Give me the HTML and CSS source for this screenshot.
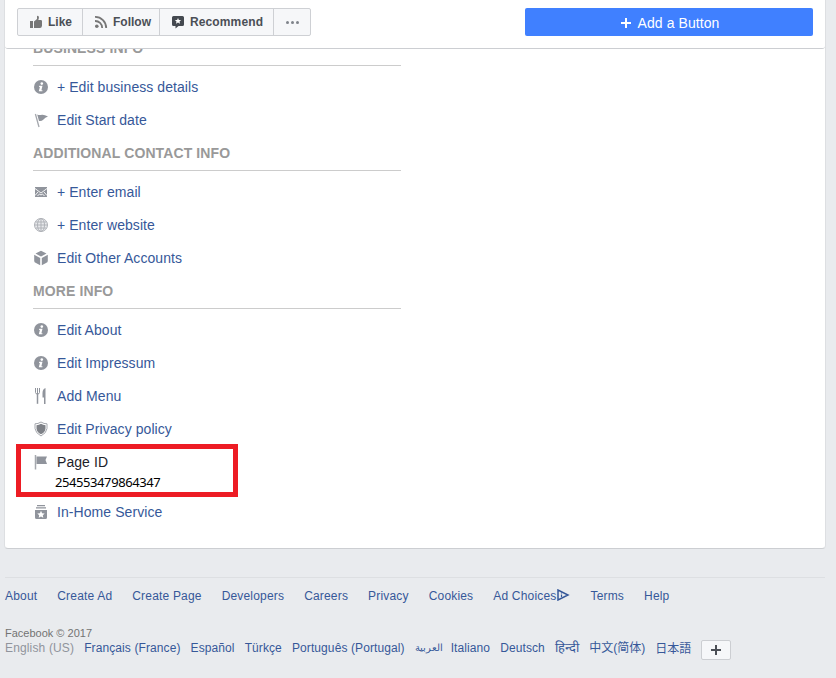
FILE: index.html
```
<!DOCTYPE html>
<html lang="en">
<head>
<meta charset="utf-8">
<title>Page Info</title>
<link rel="stylesheet" href="styles.css">
</head>
<body>
<svg class="defs" width="0" height="0">
  <symbol id="info" viewBox="0 0 16 16"><circle cx="8" cy="8" r="7" fill="#90949c"/><circle cx="8.8" cy="4.6" r="1.3" fill="#fff"/><path d="M6.300 6.800h3.200l-1.100 4.400h1v1.100H5.800l1.100-4.400h-.9z" fill="#fff"/></symbol>
</svg>
<main class="card">
  <header class="bar">
    <div class="actions">
      <button class="act like"><svg width="14" height="14" viewBox="0 0 14 14"><path fill="#777" d="M1 6h3v7H1zM5 6.600 8 4V1.200Q8.300.4 9.300 1q1 .8.500 2.400L9.300 5H12q1.200.2 1 1.200v4.600q-.3 2.200-2 2.200H5z"/></svg><span>Like</span></button>
      <button class="act follow"><svg width="14" height="14" viewBox="0 0 14 14"><g fill="none" stroke="#777" stroke-width="1.800"><path d="M1 1.900A11 11 0 0 1 12.200 13M1 6A7 7 0 0 1 8.200 13"/></g><circle cx="2.800" cy="11.200" r="1.800" fill="#777"/></svg><span>Follow</span></button>
      <button class="act rec"><svg width="14" height="14" viewBox="0 0 14 14"><path fill="#444950" d="M2.500 1h9Q13 1 13 2.500v7Q13 11 11.500 11H7.500L4.500 13.500V11h-2Q1 11 1 9.500v-7Q1 1 2.500 1z"/><path fill="#fff" d="m7 2.900.9 2 2.200.2-1.600 1.500.5 2.100-2-1.100-2 1.100.5-2.100-1.600-1.500 2.200-.2z"/></svg><span>Recommend</span></button>
      <button class="act more"><i></i><i></i><i></i></button>
    </div>
    <button class="cta"><svg width="12" height="12" viewBox="0 0 12 12"><path d="M6 1v10M1 6h10" stroke="#fff" stroke-width="2"/></svg><span>Add a Button</span></button>
  </header>
  <div class="content">
    <section>
      <h2>BUSINESS INFO</h2>
      <div class="row"><svg class="ic"><use href="#info"/></svg><a>+ Edit business details</a></div>
      <div class="row"><svg class="ic" viewBox="0 0 16 16"><path d="M2.400 2 6 15" stroke="#a5a8ae" stroke-width="1.300"/><path fill="#90949c" d="M4.200 2.500q2 1 4.800.3 2.400-.2 6 1.700-3 1.200-4.500 3Q8.500 9.500 6 9z"/></svg><a>Edit Start date</a></div>
    </section>
    <section>
      <h2>ADDITIONAL CONTACT INFO</h2>
      <div class="row"><svg class="ic" viewBox="0 0 16 16"><path fill="#90949c" d="M2 3h12v10H2z"/><path fill="none" stroke="#fff" stroke-width=".9" d="m2 4.500 6 4.500 6-4.500M2 11.500l3-3.500M14 11.500l-3-3.500M4.500 12 6.500 10l1.500 1 1.500-1 2 2"/></svg><a>+ Enter email</a></div>
      <div class="row"><svg class="ic" viewBox="0 0 16 16"><circle cx="8" cy="8" r="6.500" fill="#e9eaed"/><g fill="none" stroke="#b0b3b8"><circle cx="8" cy="8" r="6.500"/><ellipse cx="8" cy="8" rx="3.500" ry="6.500"/><path d="M8 1.500v13M1.500 8h13M2.500 5h11M2.500 11h11"/></g></svg><a>+ Enter website</a></div>
      <div class="row"><svg class="ic" viewBox="0 0 16 16"><path fill="#90949c" d="m8 .8 5.500 2.800L8 6.600 2.500 3.600zM1.200 4.800l6 3.200v7.200L3 13q-1.800-.7-1.800-2zM14.800 4.800l-6 3.200v7.200L13 13q1.800-.7 1.800-2z"/></svg><a>Edit Other Accounts</a></div>
    </section>
    <section>
      <h2>MORE INFO</h2>
      <div class="row"><svg class="ic"><use href="#info"/></svg><a>Edit About</a></div>
      <div class="row"><svg class="ic"><use href="#info"/></svg><a>Edit Impressum</a></div>
      <div class="row"><svg class="ic" viewBox="0 0 16 16"><path fill="none" stroke="#90949c" d="M2.500 0v4.500Q2.500 6 4.500 6t2-1.500V0M4.500 0v6"/><path stroke="#90949c" stroke-width="1.500" d="M4.500 6v9.800"/><path fill="#90949c" d="M12.500 0v16H11V9.500H9.500V5q0-4 3-5z"/></svg><a>Add Menu</a></div>
      <div class="row"><svg class="ic" viewBox="0 0 16 16"><path fill="#fff" stroke="#a5a8ae" d="M8 1q3 2 6 1.800v4.700Q13.500 12 8 15 2.500 12 2 7.500V2.800Q5 3 8 1z"/><path fill="#7e8187" d="M8 2.800q2 1.300 4.500 1.500v3.400Q12 11.200 8 13.300 4 11.200 3.500 7.700V4.300Q6 4.100 8 2.800z"/></svg><a>Edit Privacy policy</a></div>
      <div class="pageid">
        <div class="row"><svg class="ic" viewBox="0 0 16 16"><path stroke="#a5a8ae" stroke-width="1.500" d="M2.500 1v14.500"/><path fill="#90949c" d="M3.500 2.500h10.500l-1.500 3.500 1.500 4H3.500z"/></svg><span>Page ID</span></div>
        <div class="num">254553479864347</div>
      </div>
      <div class="row"><svg class="ic" viewBox="0 0 16 16"><path fill="#90949c" d="M4 1h8v1.200H4zM3 3.200h10v1.200H3zM2 6h12v7.500q0 1.500-1.500 1.500h-9Q2 15 2 13.500z"/><path fill="#fff" d="m8 6.800 1.100 2.400 2.600.3-1.900 1.800.5 2.500L8 12.500l-2.300 1.300.5-2.500-1.900-1.800 2.600-.3z"/></svg><a>In-Home Service</a></div>
    </section>
  </div>
</main>
<footer class="foot">
  <nav class="links"><a>About</a><a>Create Ad</a><a>Create Page</a><a>Developers</a><a>Careers</a><a>Privacy</a><a>Cookies</a><a class="adc">Ad Choices<svg width="14" height="12" viewBox="0 0 14 12"><path d="M2 1v10l10-5z" fill="none" stroke="#365899" stroke-width="1.500"/><path d="M5.500 3.500v1M5.500 5.500v2.500" stroke="#365899" stroke-width="1.200"/></svg></a><a>Terms</a><a>Help</a></nav>
  <div class="copy">Facebook © 2017</div>
  <div class="langs"><span>English (US)</span><a>Français (France)</a><a>Español</a><a>Türkçe</a><a>Português (Portugal)</a><a class="ar" lang="ar">العربية</a><a>Italiano</a><a>Deutsch</a><a class="hi" lang="hi">हिन्दी</a><a class="zh" lang="zh">中文(简体)</a><a class="ja" lang="ja">日本語</a><button class="plus"><svg width="10" height="10" viewBox="0 0 10 10"><path d="M5 0v10M0 5h10" stroke="#4b4f56" stroke-width="2"/></svg></button></div>
</footer>
</body>
</html>
```
FILE: styles.css
```
* { box-sizing: border-box; }
body { margin: 0; height: 678px; overflow: hidden; background: #e9ebee; font-family: "Liberation Sans", Arial, sans-serif; font-size: 14px; color: #1d2129; }
button { font: inherit; padding: 0; margin: 0; border: 0; }
a { color: #365899; }
svg { flex: none; display: block; }
.defs { position: absolute; }
.card { margin-left: 4px; width: 822px; height: 549px; background: #fff; border: 1px solid #dddfe2; border-top: 0; border-bottom-color: #ccced2; border-radius: 0 0 4px 4px; }
.bar { height: 49px; border-bottom: 1px solid #ccced2; border-radius: 0 0 3px 3px; display: flex; justify-content: space-between; align-items: flex-start; padding: 8px 12px; }
.actions { display: flex; height: 28px; border: 1px solid #ced0d4; border-radius: 2px; background: #f6f7f9; }
.act { display: flex; align-items: center; background: none; font-size: 12px; font-weight: bold; color: #4b4f56; border-right: 1px solid #ced0d4; white-space: nowrap; }
.act svg { margin-right: 5px; }
.like { width: 65px; padding-left: 11px; }
.follow { width: 77px; padding-left: 11px; }
.rec { width: 114px; padding-left: 11px; }
.rec span { letter-spacing: .12px; }
.more { width: 36px; border: 0; justify-content: center; gap: 2px; }
.more i { width: 3px; height: 3px; border-radius: 50%; background: #7f838a; }
.cta { width: 288px; height: 28px; background: #4080ff; border-radius: 2px; color: #fff; display: flex; align-items: center; justify-content: center; gap: 6px; padding: 2px 0 0 1px; letter-spacing: .08px; }
.content { height: 499px; overflow: hidden; padding-left: 28px; }
section { width: 368px; padding-bottom: 8px; }
section:first-child { margin-top: -10px; }
h2 { margin: 0 0 4px; height: 27px; border-bottom: 1px solid #ccc; font-size: 14px; line-height: 18px; color: #999; white-space: nowrap; letter-spacing: .11px; }
.row { height: 33px; display: flex; align-items: center; white-space: nowrap; line-height: 18px; letter-spacing: .07px; }
.ic { width: 16px; height: 16px; margin-right: 8px; }
.pageid { height: 50px; position: relative; }
.pageid::after { content: ""; position: absolute; box-sizing: border-box; left: -17px; top: -1px; width: 222px; height: 53px; border: 5px solid #ed1c24; }
.num { margin: -5px 0 0 22px; font: 13px/18px "Noto Sans", sans-serif; letter-spacing: -.42px; color: #000; }
.foot { margin: 28px 11px 0 5px; border-top: 1px solid #dddfe2; font-size: 12px; }
.links { display: flex; gap: 20px; padding-top: 10px; line-height: 16px; white-space: nowrap; letter-spacing: .18px; }
.adc { display: flex; align-items: center; }
.adc svg { position: relative; top: -1px; }
.copy { margin-top: 23px; font-size: 11px; line-height: 13px; color: #737373; }
.langs { display: flex; gap: 10px; height: 20px; align-items: center; margin-top: -2px; white-space: nowrap; line-height: 16px; letter-spacing: .1px; }
.langs span { color: #90949c; letter-spacing: .15px; }
.ar { font-size: 10px; margin-right: -2px; }
.hi { font-size: 13px; }
.zh, .ja { letter-spacing: 0; }
.zh { font-family: "Liberation Sans", "Noto Sans CJK SC", sans-serif; }
.ja { font-family: "Noto Sans CJK JP", sans-serif; }
.plus { width: 30px; height: 20px; background: #f6f7f9; border: 1px solid #ccced2; border-radius: 2px; display: flex; align-items: center; justify-content: center; position: relative; top: 2px; }
```
